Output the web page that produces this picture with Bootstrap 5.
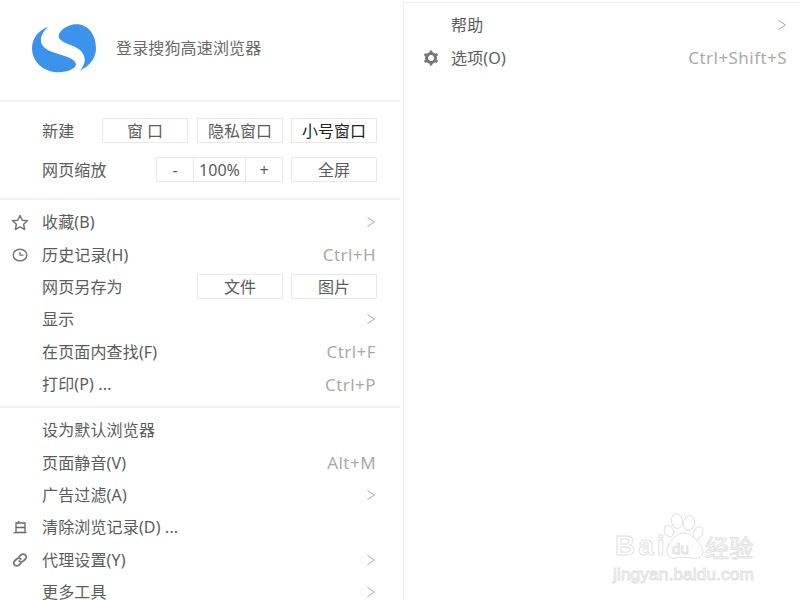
<!DOCTYPE html>
<html lang="zh">
<head>
<meta charset="utf-8">
<title>搜狗高速浏览器菜单</title>
<link rel="stylesheet" href="https://cdn.jsdelivr.net/npm/bootstrap@5.3.0/dist/css/bootstrap.min.css">
<style>
html,body{height:600px;overflow:hidden;background:#fff}
body{font-family:"Noto Sans","Noto Sans CJK SC",sans-serif;font-size:16px;line-height:1;letter-spacing:.15px;color:#5c5c5c;position:relative}
.shell{height:600px}
.pane-left{width:400px;flex:none}
.pane-right{width:397px;margin:2px 0 0 3px;flex:none;border-left:1px solid #eee;border-top:1px solid #eee;padding-top:6px}
.head{height:102px;border-bottom:2px solid #f2f2f2;padding-left:20px}
.head-text{margin-left:6px;margin-top:-4px;color:#6a6a6a}
.tools{height:98px;border-bottom:2px solid #f2f2f2;padding:16px 23px 0 42px}
.tool-row{height:25px;margin-bottom:14px}
.mbtn{width:86px;height:25px;padding:0;border:1px solid #e9e9e9;border-radius:0;font-size:16px;line-height:22px;color:#5c5c5c;background:#fff;--bs-btn-hover-bg:#fff}
.mbtn-dark{color:#222}
.zoomb{width:38px}
.zoomp{width:53px}
.gap-a{margin-left:9px}
.gap-b{margin-left:8px}
.edge-out{margin-right:-1px}
.menu-sec{padding:6px 0 6px}
.menu-sec.ruled{border-bottom:2px solid #f2f2f2;padding-bottom:5.6px}
.menu-sec.tight{padding-top:6px}
.mrow{height:32.4px;padding-right:24px}
.pane-right .mrow{padding-right:13px}
.islot{width:42px;flex:none;padding-right:3px}
.pane-right .islot{width:47px;padding-left:7px;padding-right:0}
.keys{color:#aaa;font-size:17px;letter-spacing:.45px}
.chev{color:#aaa}
.mark-wm{position:absolute;left:610px;top:510px;width:150px;height:78px}
.mark-wm span{position:absolute;color:#fff;-webkit-text-stroke:1px #e2e2e2;font-family:"Liberation Sans",sans-serif;line-height:1;white-space:nowrap}
.wm-bai{left:5px;top:22px;font-size:28px;font-weight:700;letter-spacing:3px}
.wm-du{left:62px;top:31px;font-size:15px}
.wm-cn{left:95px;top:25px;font-size:24px;font-family:"Noto Sans CJK SC",sans-serif!important}
.wm-url{left:3px;top:56px;font-size:17.3px;letter-spacing:.1px}
</style>
</head>
<body>
<svg width="0" height="0" class="position-absolute">
<defs>
<symbol id="chevron" viewBox="0 0 10 12"><path d="M1.500 1.500 8.500 6 1.500 10.500" fill="none" stroke="currentColor" stroke-width="1"/></symbol>
</defs>
</svg>
<div class="shell d-flex">
  <div class="pane-left">
    <div class="head d-flex align-items-center">
      <svg width="90" height="70" viewBox="0 0 270 210" aria-label="搜狗浏览器">
        <path fill="#3b93ec" d="M170 28C205 28 228 60 228 100C228 130 210 152 180 167C198 145 200 125 180 105C160 88 125 85 117 68C112 50 140 28 170 28Z"/>
        <path fill="#3b93ec" d="M85 35C62 55 55 78 72 97C90 115 130 118 155 132C172 142 172 155 155 163C145 170 128 172 115 172C70 172 36 140 36 100C36 70 55 45 85 35Z"/>
      </svg>
      <div class="head-text">登录搜狗高速浏览器</div>
    </div>
    <div class="tools">
      <div class="tool-row d-flex align-items-center">
        <span class="flex-grow-1">新建</span>
        <button class="btn mbtn">窗 口</button>
        <button class="btn mbtn gap-a">隐私窗口</button>
        <button class="btn mbtn mbtn-dark gap-b">小号窗口</button>
      </div>
      <div class="tool-row d-flex align-items-center">
        <span class="flex-grow-1">网页缩放</span>
        <div class="btn-group">
          <button class="btn mbtn zoomb">-</button>
          <button class="btn mbtn zoomp">100%</button>
          <button class="btn mbtn zoomb">+</button>
        </div>
        <button class="btn mbtn gap-b">全屏</button>
      </div>
    </div>
    <div class="menu-sec ruled">
      <div class="mrow d-flex align-items-center">
        <span class="islot d-flex justify-content-center"><svg width="18" height="17" viewBox="0 0 18 17"><path d="M9 1.500 11.200 6.200 16.500 6.800 12.600 10.300 13.700 15.500 9 12.900 4.300 15.500 5.400 10.300 1.500 6.800 6.800 6.200Z" fill="none" stroke="#777" stroke-width="1.500" stroke-linejoin="round"/></svg></span>
        <span class="flex-grow-1">收藏(B)</span>
        <svg class="chev" width="10" height="12"><use href="#chevron"/></svg>
      </div>
      <div class="mrow d-flex align-items-center">
        <span class="islot d-flex justify-content-center"><svg width="16" height="14" viewBox="0 0 16 14"><ellipse cx="8" cy="7" rx="6.800" ry="5.800" fill="none" stroke="#777" stroke-width="1.500"/><path d="M8 3.800V7.200H11.500" fill="none" stroke="#777" stroke-width="1.300"/></svg></span>
        <span class="flex-grow-1">历史记录(H)</span>
        <span class="keys">Ctrl+H</span>
      </div>
      <div class="mrow d-flex align-items-center">
        <span class="islot"></span>
        <span class="flex-grow-1">网页另存为</span>
        <button class="btn mbtn">文件</button>
        <button class="btn mbtn gap-b edge-out">图片</button>
      </div>
      <div class="mrow d-flex align-items-center">
        <span class="islot"></span>
        <span class="flex-grow-1">显示</span>
        <svg class="chev" width="10" height="12"><use href="#chevron"/></svg>
      </div>
      <div class="mrow d-flex align-items-center">
        <span class="islot"></span>
        <span class="flex-grow-1">在页面内查找(F)</span>
        <span class="keys">Ctrl+F</span>
      </div>
      <div class="mrow d-flex align-items-center">
        <span class="islot"></span>
        <span class="flex-grow-1">打印(P) ...</span>
        <span class="keys">Ctrl+P</span>
      </div>
    </div>
    <div class="menu-sec tight">
      <div class="mrow d-flex align-items-center">
        <span class="islot"></span>
        <span class="flex-grow-1">设为默认浏览器</span>
      </div>
      <div class="mrow d-flex align-items-center">
        <span class="islot"></span>
        <span class="flex-grow-1">页面静音(V)</span>
        <span class="keys">Alt+M</span>
      </div>
      <div class="mrow d-flex align-items-center">
        <span class="islot"></span>
        <span class="flex-grow-1">广告过滤(A)</span>
        <svg class="chev" width="10" height="12"><use href="#chevron"/></svg>
      </div>
      <div class="mrow d-flex align-items-center">
        <span class="islot d-flex justify-content-center"><svg width="16" height="14" viewBox="0 0 16 14"><path d="M7 1 6 3H4V12.500H13V3H6M4.300 7.500H12.700M1.500 12.700H14.500" fill="none" stroke="#666" stroke-width="1.300"/></svg></span>
        <span class="flex-grow-1">清除浏览记录(D) ...</span>
      </div>
      <div class="mrow d-flex align-items-center">
        <span class="islot d-flex justify-content-center"><svg width="16" height="14" viewBox="0 0 16 14"><g fill="none" stroke="#777" stroke-width="1.800" stroke-linecap="round"><path d="M7 3.800 8.700 2.200C10 1 12 1 13.300 2C14.600 3.200 14.600 4.800 13.400 6L11.500 7.800C10.200 9 8.300 9 7.200 8"/><path d="M9 10.200 7.300 11.800C6 13 4 13 2.700 12C1.400 10.800 1.400 9.200 2.600 8L4.500 6.200C5.800 5 7.700 5 8.800 6"/></g></svg></span>
        <span class="flex-grow-1">代理设置(Y)</span>
        <svg class="chev" width="10" height="12"><use href="#chevron"/></svg>
      </div>
      <div class="mrow d-flex align-items-center">
        <span class="islot"></span>
        <span class="flex-grow-1">更多工具</span>
        <svg class="chev" width="10" height="12"><use href="#chevron"/></svg>
      </div>
    </div>
  </div>
  <div class="pane-right">
    <div class="mrow d-flex align-items-center">
      <span class="islot"></span>
      <span class="flex-grow-1">帮助</span>
      <svg class="chev" width="10" height="12"><use href="#chevron"/></svg>
    </div>
    <div class="mrow d-flex align-items-center">
      <span class="islot d-flex justify-content-center"><svg width="18" height="16" viewBox="0 0 18 16"><circle cx="9" cy="8" r="4.500" fill="none" stroke="#777" stroke-width="3"/><path d="M9 .6V3M9 13V15.400M2.500 4.200 4.700 5.400M13.300 10.600 15.500 11.800M2.500 11.800 4.700 10.600M13.300 5.400 15.500 4.200" stroke="#777" stroke-width="2.600"/></svg></span>
      <span class="flex-grow-1">选项(O)</span>
      <span class="keys">Ctrl+Shift+S</span>
    </div>
  </div>
</div>
<div class="mark-wm">
  <svg class="position-absolute top-0 start-0" width="150" height="78" viewBox="0 0 150 78">
    <g fill="#fff" stroke="#e2e2e2" stroke-width="1">
      <ellipse cx="59" cy="21" rx="4.500" ry="6" transform="rotate(-25 59 21)"/>
      <ellipse cx="67" cy="11" rx="5.500" ry="7.500" transform="rotate(-10 67 11)"/>
      <ellipse cx="79" cy="13" rx="5.500" ry="7.500" transform="rotate(10 79 13)"/>
      <ellipse cx="88" cy="23" rx="4.500" ry="6.500" transform="rotate(25 88 23)"/>
      <path d="M74 23C82 23 93 35 93 42C93 48 87 49 81 48C75 47 71 47 66 48C60 49 56 46 57 40C58 33 66 23 74 23Z"/>
    </g>
  </svg>
  <span class="wm-bai">Bai</span>
  <span class="wm-du">du</span>
  <span class="wm-cn">经验</span>
  <span class="wm-url">jingyan.baidu.com</span>
</div>
<script src="https://cdn.jsdelivr.net/npm/bootstrap@5.3.0/dist/js/bootstrap.bundle.min.js"></script>
</body>
</html>
